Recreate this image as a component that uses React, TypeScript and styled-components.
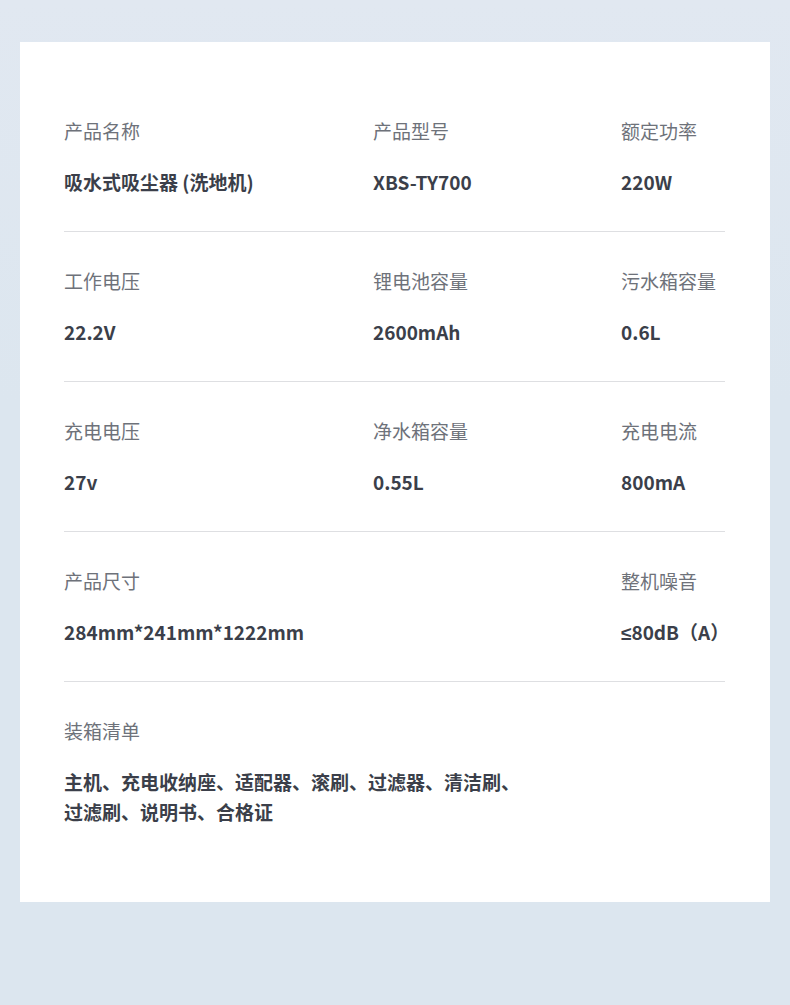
import styled, { createGlobalStyle } from 'styled-components';

const GlobalStyle = createGlobalStyle`
  html, body {
    margin: 0;
    padding: 0;
  }
  body {
    background: linear-gradient(180deg, #e1e8f1 0%, #dce6ef 40%, #dce6ef 100%);
    font-family: "Noto Sans CJK SC", "Noto Sans", sans-serif;
  }
`

const Page = styled.div`
  width: 790px;
  height: 1005px;
  padding: 42px 20px 0;
  box-sizing: border-box;
`

const Card = styled.div`
  background: #ffffff;
  height: 860px;
  box-sizing: border-box;
  padding: 40px 45px 0 44px;
`

const Row = styled.div<{ $last?: boolean }>`
  display: grid;
  grid-template-columns: 309px 248px 1fr;
  padding: 37px 0 ${p => (p.$last ? '0' : '37px')};
  border-bottom: ${p => (p.$last ? 'none' : '1px solid #dedfe2')};
`

const Cell = styled.div`
  display: flex;
  flex-direction: column;
  min-width: 0;
`

const Label = styled.div`
  font-size: 19px;
  line-height: 24px;
  color: #6e727a;
  margin-bottom: 27px;
  white-space: nowrap;
`

const Value = styled.div<{ $multi?: boolean }>`
  font-size: 19px;
  line-height: ${p => (p.$multi ? '30px' : '24px')};
  height: ${p => (p.$multi ? 'auto' : '24px')};
  margin-top: ${p => (p.$multi ? '-3px' : '0')};
  font-weight: 700;
  color: #3b3f4a;
  white-space: ${p => (p.$multi ? 'normal' : 'nowrap')};
`

// the CJK font draws ≤ slanted, the reference has the plain one
const Sign = styled.span`
  font-family: "Liberation Sans", sans-serif;
  line-height: 1;
`

type Item = { label: string; value: React.ReactNode } | null

const rows: Item[][] = [
  [
    { label: '产品名称', value: '吸水式吸尘器 (洗地机)' },
    { label: '产品型号', value: 'XBS-TY700' },
    { label: '额定功率', value: '220W' },
  ],
  [
    { label: '工作电压', value: '22.2V' },
    { label: '锂电池容量', value: '2600mAh' },
    { label: '污水箱容量', value: '0.6L' },
  ],
  [
    { label: '充电电压', value: '27v' },
    { label: '净水箱容量', value: '0.55L' },
    { label: '充电电流', value: '800mA' },
  ],
  [
    { label: '产品尺寸', value: '284mm*241mm*1222mm' },
    null,
    { label: '整机噪音', value: <><Sign>≤</Sign>80dB（A）</> },
  ],
]

const PackList = styled.div`
  grid-column: 1 / -1;
`

export default function App() {
  return (
    <>
      <GlobalStyle />
      <Page>
        <Card>
          {rows.map((row, i) => (
            <Row key={i}>
              {row.map((item, j) => (
                <Cell key={j}>
                  {item && (
                    <>
                      <Label>{item.label}</Label>
                      <Value>{item.value}</Value>
                    </>
                  )}
                </Cell>
              ))}
            </Row>
          ))}
          <Row $last>
            <PackList>
              <Label>装箱清单</Label>
              <Value $multi>
                主机、充电收纳座、适配器、滚刷、过滤器、清洁刷、
                <br />
                过滤刷、说明书、合格证
              </Value>
            </PackList>
          </Row>
        </Card>
      </Page>
    </>
  )
}
